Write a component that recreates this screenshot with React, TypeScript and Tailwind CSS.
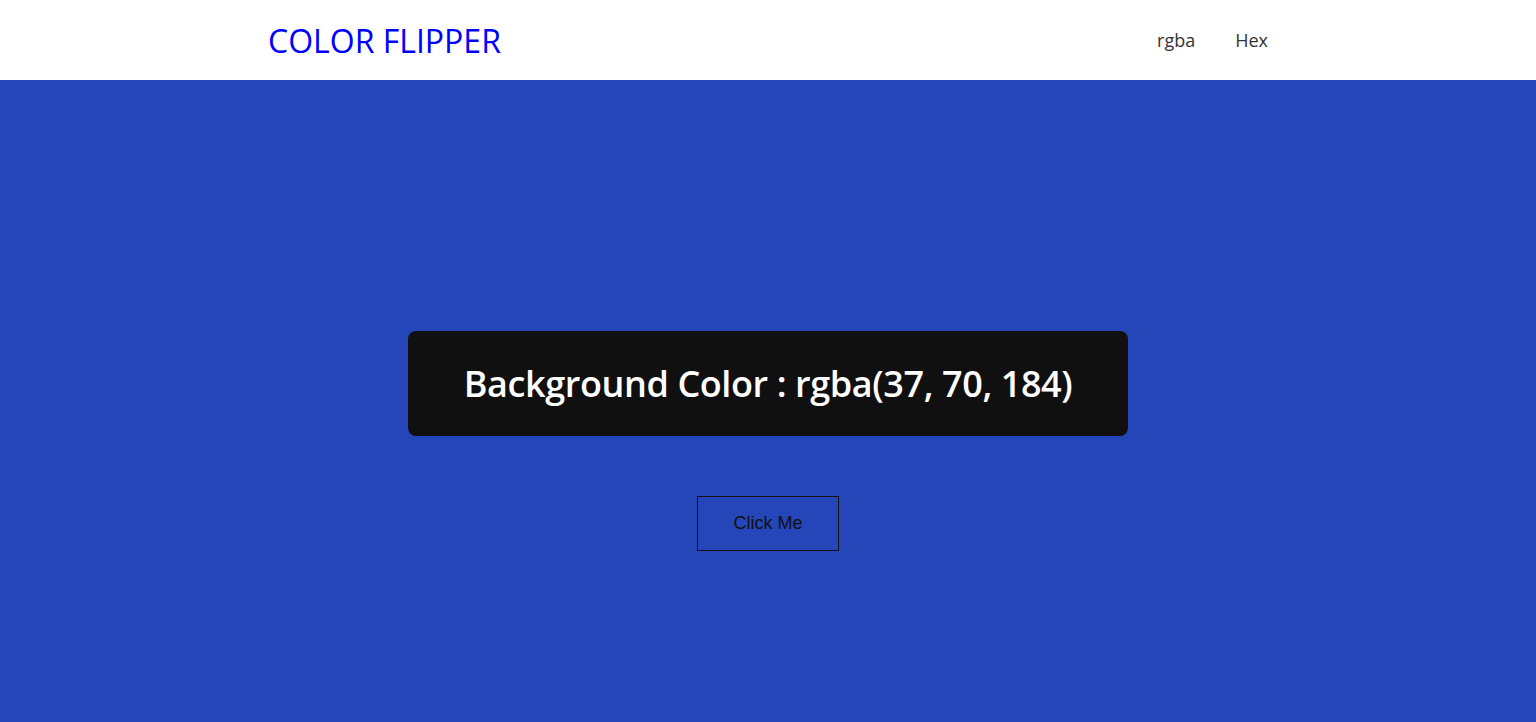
import React, { useState } from 'react';

const colors = [
  [37, 70, 184],
  [200, 40, 90],
  [20, 140, 80],
  [230, 160, 30],
];

const App = () => {
  const [index, setIndex] = useState(0);
  const [r, g, b] = colors[index];

  return (
    <div className="font-['Open_Sans',sans-serif]">
      {/* Header */}
      <nav className="h-20 bg-white">
        <div className="w-[1000px] h-full mx-auto flex items-center justify-between">
          <h1 className="text-[32px] font-medium text-[#0000ff] leading-none mt-0.5">COLOR FLIPPER</h1>
          <ul className="flex items-center gap-10 text-lg text-[#333]">
            <li>rgba</li>
            <li>Hex</li>
          </ul>
        </div>
      </nav>

      {/* Main */}
      <main
        className="min-h-screen flex flex-col items-center justify-center gap-[60px]"
        style={{ backgroundColor: `rgb(${r}, ${g}, ${b})` }}
      >
        <div className="w-[720px] h-[105px] bg-[#111010] rounded-lg flex items-center justify-center">
          <h2 className="text-[36px] font-semibold text-white tracking-[-0.4px]">
            Background Color : rgba({r}, {g}, {b})
          </h2>
        </div>
        <button
          className="w-[142px] h-[55px] border border-[#111] text-lg text-[#111] leading-none pb-0.5 font-['Liberation_Sans',Arial,sans-serif]"
          onClick={() => setIndex((index + 1) % colors.length)}
        >
          Click Me
        </button>
      </main>
    </div>
  );
};

export default App;
